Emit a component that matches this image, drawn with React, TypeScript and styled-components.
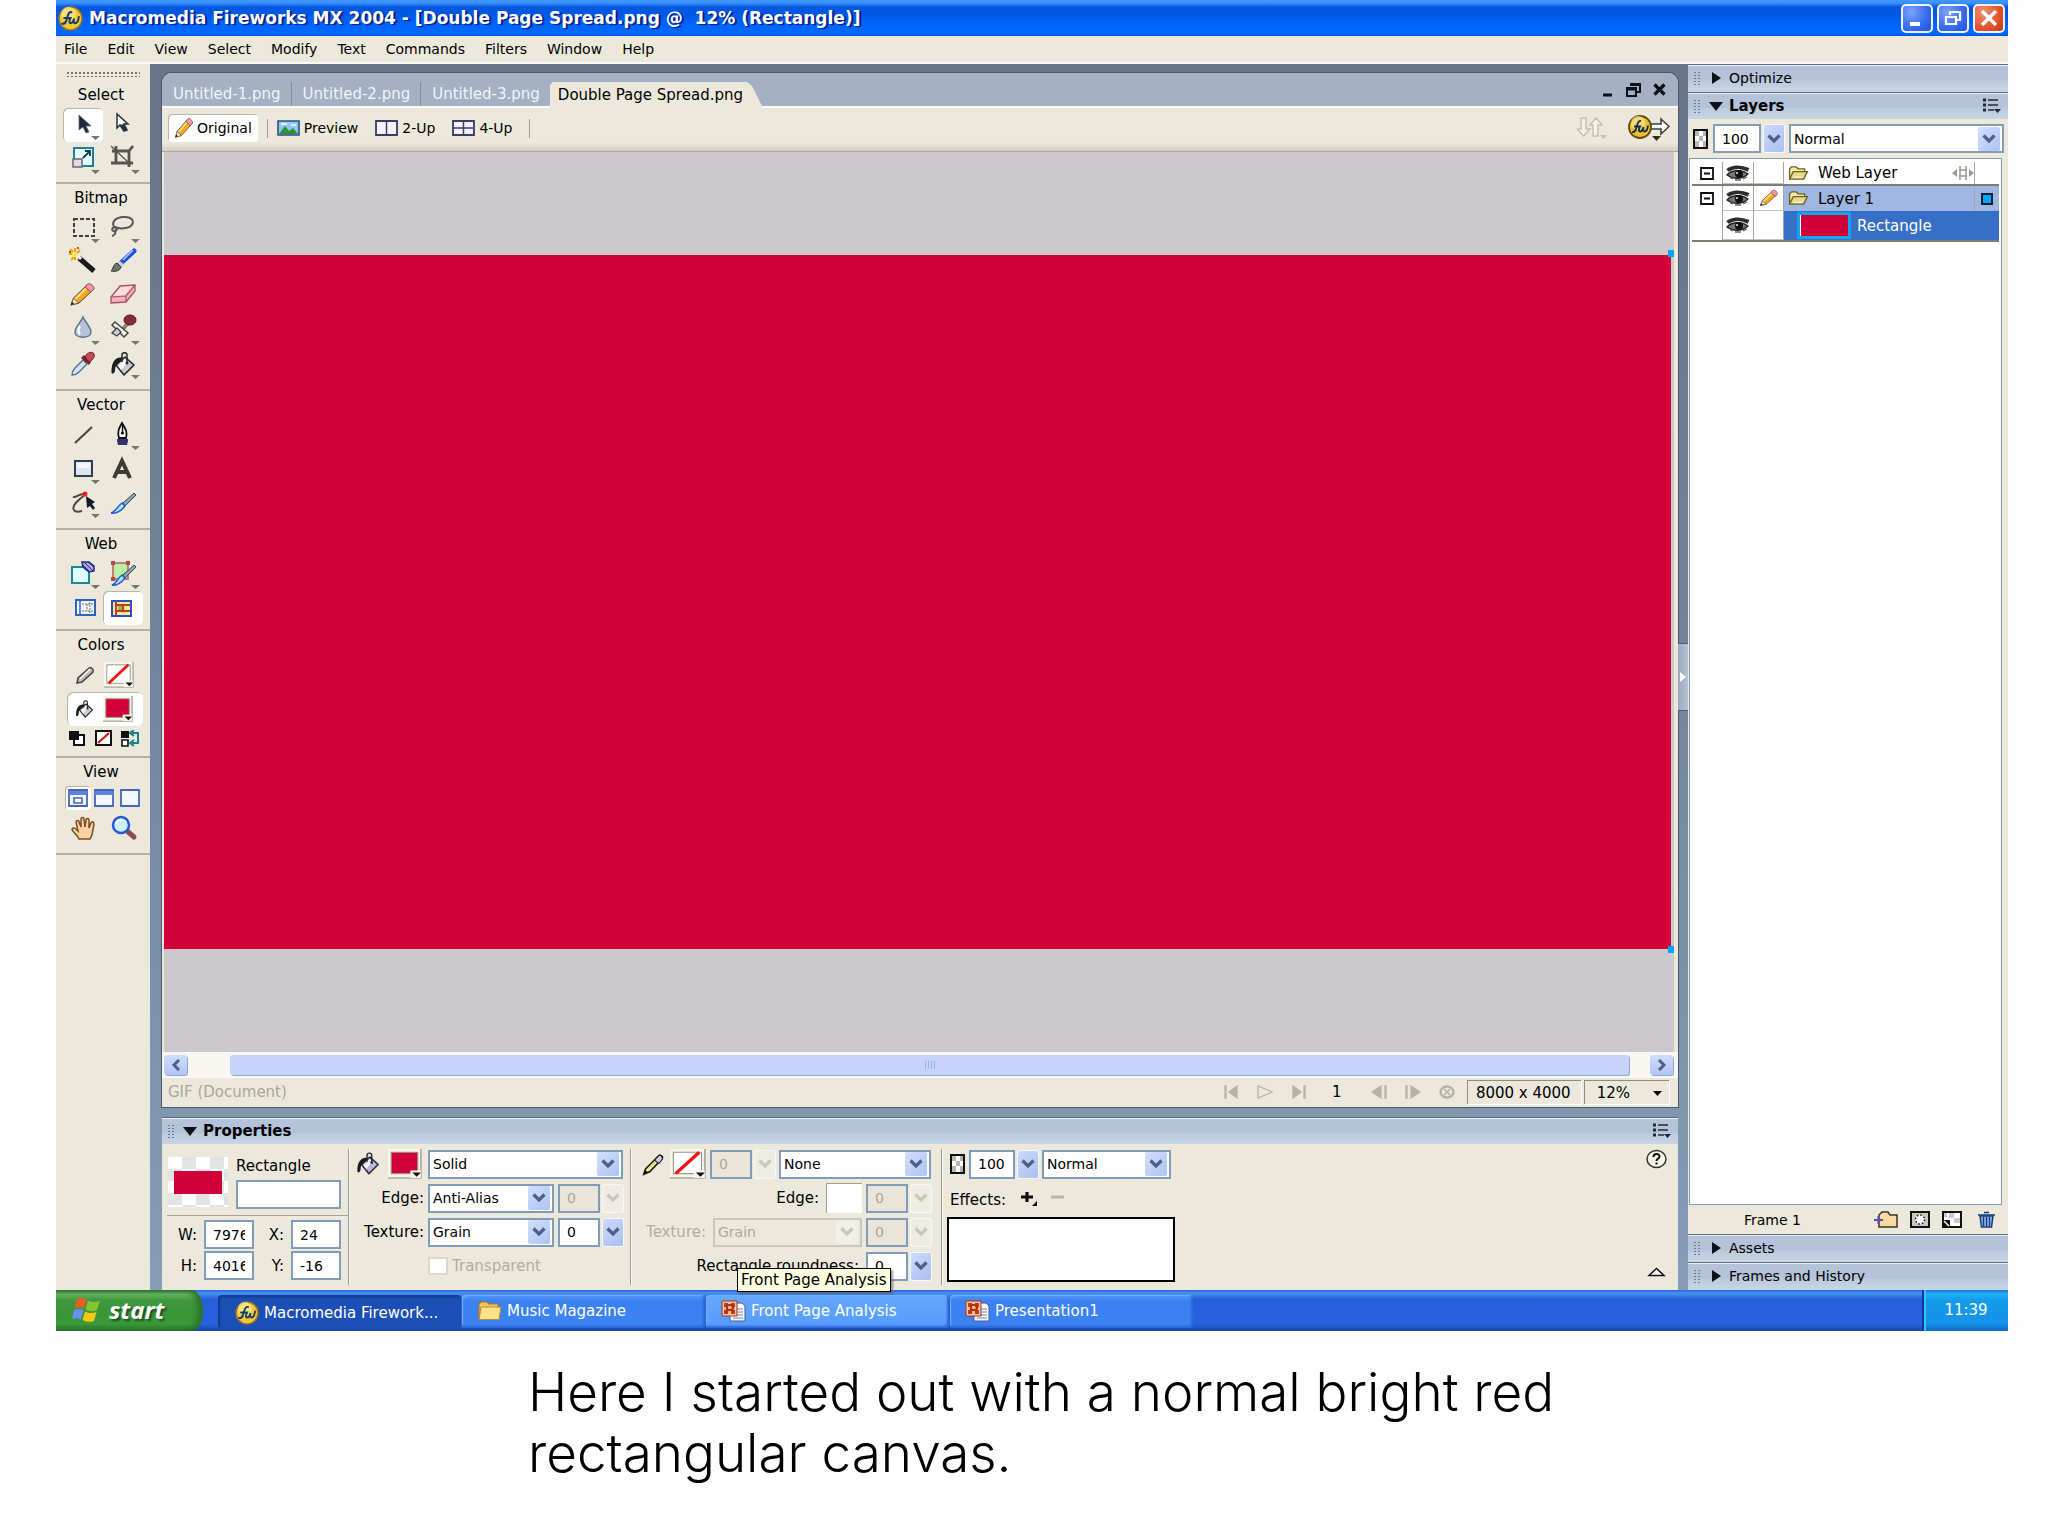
import React from "react";
import styled, { createGlobalStyle, css } from "styled-components";

const BEIGE = "#ece9dc";
const RED = "#d20039";
const BLUE_BORDER = "#7f9db9";

const GlobalStyle = createGlobalStyle`
  *, *::before, *::after { box-sizing: border-box; }
  body { margin: 0; background: #fefefe; color: #000; font: 14px/18px "DejaVu Sans", Verdana, sans-serif; }
  button, input, select { font: inherit; color: inherit; margin: 0; }
  button { padding: 0; border: 0; background: none; }
  ul { list-style: none; margin: 0; padding: 0; }
  svg { display: block; flex: none; }
`;

/* ---------- page ---------- */

const Slide = styled.div`
  min-height: 100vh;
  display: flex;
  flex-direction: column;
`;

const Screen = styled.main`
  flex: 1;
  display: flex;
  flex-direction: column;
  margin: 0 40px 0 56px;
`;

const Caption = styled.p`
  margin: 0;
  padding: 31px 0 0 528px;
  height: 205px;
  max-width: 1600px;
  font: 300 53px/61px Inter, "Open Sans", sans-serif;
`;

/* ---------- title bar and menu ---------- */

const TitleBar = styled.header`
  display: flex;
  align-items: center;
  gap: 6px;
  height: 36px;
  padding: 0 3px 0 2px;
  background: linear-gradient(#4098fc 0, #3a90f8 3px, #0357e0 7px, #0058e6 14px, #0066ff 26px, #0068ff 34px, #0050d8);
  color: #fff;
`;

const AppTitle = styled.h1`
  flex: 1;
  margin: 0;
  font-size: 17px;
  line-height: 24px;
  font-weight: 700;
  white-space: pre;
  text-shadow: 2px 1px 1px #0a1883;
`;

const WindowButtons = styled.div`
  display: flex;
  gap: 4px;
`;

const WindowButton = styled.button<{ $close?: boolean }>`
  display: grid;
  place-items: center;
  width: 32px;
  height: 29px;
  border: 2px solid #eef3ff;
  border-radius: 5px;
  background: ${(p) =>
    p.$close
      ? "radial-gradient(circle at 30% 25%, #f09070, #e2522b 60%, #c8370f)"
      : "radial-gradient(circle at 30% 25%, #7fa4fa, #3a6df0 55%, #2253d8)"};
`;

const MenuBar = styled.nav`
  display: flex;
  align-items: center;
  gap: 20px;
  height: 28px;
  padding: 0 8px;
  background: ${BEIGE};
  border-bottom: 2px solid #fbfaf5;
`;

/* ---------- workspace ---------- */

const Workspace = styled.div`
  flex: 1;
  display: flex;
  background: linear-gradient(#67748a, #6e8298 40%, #859db5);
`;

const Toolbox = styled.aside`
  width: 94px;
  background: ${BEIGE};
`;

const Grip = styled.div`
  height: 6px;
  margin: 6px 3px 5px;
  background-image: radial-gradient(#77746a 1px, transparent 1px);
  background-size: 4px 4px;
`;

const ToolGroup = styled.section<{ $pad: number }>`
  padding: 1px 7px ${(p) => p.$pad}px;
  border-bottom: 2px solid #b4b1a3;
`;

const GroupTitle = styled.h2`
  margin: 0;
  padding-right: 4px;
  font-size: 15px;
  line-height: 26px;
  font-weight: 400;
  text-align: center;
`;

const ToolGrid = styled.div`
  display: grid;
  grid-template-columns: 40px 40px;
`;

const Tool = styled.button<{ $on?: boolean }>`
  display: block;
  height: 34px;
  ${(p) =>
    p.$on &&
    css`
      border-radius: 5px;
      background: #fff;
      box-shadow: inset 1px 1px 0 #b9b5a6;
    `}
`;

const FillRow = styled.div<{ $on?: boolean }>`
  display: flex;
  align-items: center;
  gap: 9px;
  height: 34px;
  margin-left: 4px;
  padding-left: 8px;
  border-radius: 6px;
  ${(p) => p.$on && "background: #fff; box-shadow: inset 1px 1px 0 #b9b5a6;"}
`;

const MiniRow = styled.div<{ $tall?: boolean }>`
  display: flex;
  justify-content: space-between;
  align-items: center;
  height: ${(p) => (p.$tall ? 26 : 24)}px;
  padding: 0 3px 0 5px;
`;

const MiniTool = styled.button<{ $on?: boolean }>`
  padding: 3px;
  margin: -3px;
  ${(p) => p.$on && "border-radius: 4px; background: #fff; box-shadow: inset 1px 1px 0 #b9b5a6;"}
`;

const Center = styled.div`
  flex: 1;
  min-width: 0;
  display: flex;
  flex-direction: column;
  gap: 10px;
  padding: 9px 0 0 12px;
`;

const Splitter = styled.div`
  width: 10px;
  display: flex;
  align-items: center;
`;

const SplitterHandle = styled.button`
  display: grid;
  place-items: center;
  width: 10px;
  height: 68px;
  border: solid #4b5c70;
  border-width: 1px 0;
  background: linear-gradient(90deg, #9aabc0, #b9c1d2);
`;

/* ---------- document window ---------- */

const DocWindow = styled.section`
  flex: 1;
  display: flex;
  flex-direction: column;
  border-radius: 10px 10px 0 0;
  background: ${BEIGE};
  box-shadow: 0 0 0 1px #49586c;
`;

const TabBar = styled.div`
  display: flex;
  align-items: flex-end;
  height: 35px;
  border-bottom: 2px solid #fdfdfa;
  border-radius: 10px 10px 0 0;
  background: #a4b0c3;
`;

const Tab = styled.button`
  height: 24px;
  padding: 0 10px 0 11px;
  font-size: 15px;
  color: #f1f5fb;
  & + & { border-left: 1px solid #7f8da3; }
`;

const ActiveTab = styled.button`
  height: 26px;
  margin-bottom: -2px;
  padding: 0 20px 0 8px;
  font-size: 15px;
  background: ${BEIGE};
  clip-path: polygon(0 3px, 3px 0, calc(100% - 16px) 0, calc(100% - 11px) 4px, 100% 100%, 0 100%);
`;

const DocControls = styled.div`
  display: flex;
  align-items: center;
  gap: 12px;
  align-self: center;
  margin: 0 12px 0 auto;
`;

const ViewBar = styled.div`
  display: flex;
  align-items: center;
  gap: 17px;
  height: 44px;
  padding: 0 8px 3px 6px;
  border-bottom: 1px solid #aaa798;
  background: linear-gradient(${BEIGE} 80%, #d3d0c1);
`;

const ViewButton = styled.button<{ $on?: boolean }>`
  display: flex;
  align-items: center;
  gap: 4px;
  ${(p) =>
    p.$on &&
    css`
      height: 28px;
      gap: 3px;
      padding: 0 6px;
      border-radius: 4px;
      background: #fff;
      box-shadow: inset 1px 1px 0 #b9b5a6;
    `}
`;

const BarRule = styled.span<{ $tight?: boolean }>`
  width: 1px;
  height: 19px;
  margin: 0 ${(p) => (p.$tight ? -8 : 0)}px;
  background: #a29f92;
`;

const ViewBarEnd = styled.div`
  display: flex;
  align-items: center;
  gap: 20px;
  margin-left: auto;
`;

const CanvasArea = styled.div`
  flex: 1;
  display: flex;
  margin: 0 4px 0 2px;
  padding: 103px 3px 103px 0;
  background: #cbc9cc;
`;

const RedCanvas = styled.div`
  position: relative;
  flex: 1;
  background: ${RED};
`;

const Handle = styled.span<{ $bottom?: boolean }>`
  position: absolute;
  right: -3px;
  ${(p) => (p.$bottom ? "bottom: -4px" : "top: -5px")};
  width: 6px;
  height: 7px;
  background: #00a5ff;
`;

const ScrollBar = styled.div`
  display: flex;
  align-items: center;
  height: 25px;
  padding: 0 5px 0 2px;
  background: #f8f7f2;
`;

const ScrollButton = styled.button`
  display: grid;
  place-items: center;
  width: 23px;
  height: 20px;
  border-radius: 3px;
  background: linear-gradient(#cfdcfe, #b2c6f4);
  box-shadow: 1px 1px 0 #8ea6d8;
`;

const ScrollTrack = styled.div`
  flex: 1;
  padding: 0 21px 0 43px;
`;

const ScrollThumb = styled.div`
  display: flex;
  justify-content: center;
  align-items: center;
  gap: 2px;
  height: 20px;
  border-radius: 3px;
  background: #c6d4fc;
  box-shadow: 1px 1px 0 #8ea6d8;
`;

const ThumbNotch = styled.i`
  width: 1px;
  height: 8px;
  background: #94aee6;
`;

const StatusBar = styled.div`
  display: flex;
  align-items: center;
  height: 30px;
  padding: 0 9px 1px 6px;
  border-top: 1px solid #fbfaf5;
`;

const StatusName = styled.span`
  flex: 1;
  font-size: 15px;
  color: #a9a798;
`;

const FrameControls = styled.div`
  display: flex;
  align-items: center;
  gap: 18px;
  margin-right: 12px;
`;

const FrameNumber = styled.span`
  width: 28px;
  padding-right: 4px;
  text-align: center;
  font-size: 15px;
`;

const StatusBox = styled.span`
  display: flex;
  align-items: center;
  justify-content: center;
  gap: 23px;
  height: 24px;
  padding: 0 10px 0 8px;
  border: solid #8f8d80;
  border-width: 1px 0 0 1px;
  box-shadow: 1px 1px 0 #fff;
  font-size: 15px;
  & + & { margin-left: 3px; padding: 0 7px 0 12px; }
`;

/* ---------- panel headers ---------- */

const PanelHead = styled.div<{ $open?: boolean }>`
  display: flex;
  align-items: center;
  gap: ${(p) => (p.$open ? 8 : 10)}px;
  height: ${(p) => (p.$open ? 27 : 28)}px;
  padding: 0 6px ${(p) => (p.$open ? 0 : 2)}px 5px;
  border-top: 1px solid #5c6b7f;
  box-shadow: inset 0 1px 0 #e9f0f8;
  background: linear-gradient(#b4c2da 0 55%, #bccbdd 60%, #c6d6e4);
`;

const HeadGrip = styled.span`
  width: 8px;
  height: 14px;
  background-image: radial-gradient(#6b7a90 1px, transparent 1px);
  background-size: 4px 3px;
`;

const HeadTitle = styled.h2<{ $bold?: boolean }>`
  flex: 1;
  margin: 0 0 0 -2px;
  font-size: ${(p) => (p.$bold ? 15 : 14)}px;
  line-height: 18px;
  font-weight: ${(p) => (p.$bold ? 700 : 400)};
`;

/* ---------- form controls ---------- */

const TextBox = styled.input<{ $w?: number }>`
  ${(p) => (p.$w ? `width: ${p.$w}px` : "width: 100%")};
  flex: none;
  height: 29px;
  padding: 0 7px;
  border: 2px solid ${BLUE_BORDER};
  background: #fff;
  &:disabled { background: #e9e6d9; color: #aaa79a; }
`;

const DropWrap = styled.span<{ $w?: number; $off?: boolean }>`
  display: grid;
  grid-template-columns: 1fr 24px;
  align-items: center;
  ${(p) => (p.$w ? `width: ${p.$w}px; flex: none` : "flex: 1")};
  height: 29px;
  border: 2px solid ${(p) => (p.$off ? "#cbc8b9" : BLUE_BORDER)};
  background: ${(p) => (p.$off ? BEIGE : "#fff")};
`;

const DropSelect = styled.select`
  grid-area: 1 / 1 / 2 / 3;
  width: 100%;
  height: 100%;
  padding: 0 24px 0 3px;
  border: 0;
  appearance: none;
  background: none;
  &:disabled { color: #aaa79a; opacity: 1; }
`;

const ArrowFace = styled.span<{ $off?: boolean }>`
  grid-area: 1 / 2;
  display: grid;
  place-items: center;
  width: 22px;
  height: 24px;
  border-radius: 2px;
  pointer-events: none;
  color: ${(p) => (p.$off ? "#c9c7ba" : "#4d6185")};
  background: ${(p) => (p.$off ? "#f1efe6" : "linear-gradient(135deg, #d3dffb, #aec3f3)")};
`;

const StepButton = styled.button`
  display: grid;
  place-items: center;
  width: 20px;
  height: 27px;
  flex: none;
  border-radius: 2px;
  color: #4d6185;
  background: linear-gradient(135deg, #cddafa, #aabff0);
  box-shadow: 0 0 0 1px #f6f8ff;
  &:disabled { color: #c9c7ba; background: #efede3; }
`;

const Stepper = styled.span`
  display: flex;
  align-items: center;
  gap: 3px;
`;

const Chevron = () => (
  <svg width="14" height="10" viewBox="0 0 14 10" aria-hidden="true">
    <path d="M1.5 1.5 7 7l5.5-5.5" fill="none" stroke="currentColor" strokeWidth="3.2" />
  </svg>
);

type DropProps = { label: string; value: string; w?: number; off?: boolean; id?: string };
const Drop = ({ label, value, w, off, id }: DropProps) => (
  <DropWrap $w={w} $off={off}>
    <DropSelect id={id} aria-label={label} disabled={off} defaultValue={value}>
      <option>{value}</option>
    </DropSelect>
    <ArrowFace $off={off}><Chevron /></ArrowFace>
  </DropWrap>
);

const NumberStep = ({ label, value, w, off, id }: DropProps) => (
  <Stepper>
    <TextBox id={id} $w={w} aria-label={label} defaultValue={value} disabled={off} />
    <StepButton disabled={off} aria-label={`Change ${label}`}><Chevron /></StepButton>
  </Stepper>
);

/* ---------- properties panel ---------- */

const Properties = styled.section`
  height: 173px;
  background: ${BEIGE};
`;

const PropBody = styled.div`
  display: flex;
  padding: 5px 8px 0 5px;
`;

const Column = styled.div<{ $w: number }>`
  width: ${(p) => p.$w}px;
  height: 136px;
  border-right: 1px solid #9b998c;
  box-shadow: 1px 0 0 #faf9f4;
`;

const PropRow = styled.div<{ $end?: boolean }>`
  display: flex;
  align-items: center;
  gap: 4px;
  height: 30px;
  margin-bottom: 4px;
  padding-right: ${(p) => (p.$end ? 10 : 0)}px;
  ${(p) => p.$end && "justify-content: flex-end"};
`;

const PropLabel = styled.label<{ $off?: boolean; $w?: number }>`
  ${(p) => p.$w && `width: ${p.$w}px`};
  flex: none;
  margin-right: ${(p) => (p.$w ? 0 : 3)}px;
  font-size: 15px;
  text-align: right;
  color: ${(p) => (p.$off ? "#b0ad9f" : "#000")};
`;

const ObjectHead = styled.div`
  display: flex;
  gap: 8px;
  height: 67px;
  padding: 8px 7px 0 1px;
  border-bottom: 1px solid #a5a395;
`;

const Preview = styled.div`
  display: grid;
  place-items: center;
  width: 60px;
  height: 50px;
  background: conic-gradient(#e3e2e4 25%, #fff 0 50%, #e3e2e4 0 75%, #fff 0) 0 0 / 28px 24px;
  &::after {
    content: "";
    width: 48px;
    height: 23px;
    background: ${RED};
  }
`;

const ObjectName = styled.label`
  flex: 1;
  display: flex;
  flex-direction: column;
  gap: 5px;
  font-size: 15px;
  line-height: 18px;
`;

const Measures = styled.div`
  display: grid;
  grid-template-columns: 30px 50px 23px 50px;
  column-gap: 7px;
  row-gap: 2px;
  align-items: center;
  padding-top: 4px;
`;

const FillTools = styled.span`
  display: flex;
  align-items: center;
  gap: 8px;
  width: 75px;
  padding-left: 7px;
`;

const Check = styled.input`
  appearance: none;
  width: 20px;
  height: 18px;
  border: 2px solid #dcd9cc;
  background: #fff;
`;

const EdgeBox = styled.span`
  width: 36px;
  height: 30px;
  border: solid #a3a194;
  border-width: 1px 0 0 1px;
  background: #fff;
`;

const EffectColumn = styled.div`
  flex: 1;
  padding-left: 8px;
`;

const EffectList = styled.div`
  width: 228px;
  height: 65px;
  margin: 3px 0 0 -3px;
  border: 2px solid #000;
  background: #fff;
`;

const EffectLabel = styled.span`
  padding: 4px 10px 0 0;
  font-size: 15px;
`;

const PropEnd = styled.div`
  display: flex;
  flex-direction: column;
  align-items: center;
  justify-content: space-between;
  height: 128px;
  padding-right: 3px;
`;

/* ---------- right panels ---------- */

const RightDock = styled.aside`
  width: 320px;
  display: flex;
  flex-direction: column;
  background: ${BEIGE};
`;

const BlendRow = styled.div`
  display: flex;
  align-items: center;
  gap: 5px;
  height: 39px;
  padding: 0 4px 0 5px;
`;

const LayerList = styled.ul`
  flex: 1;
  margin: 0 6px 0 1px;
  padding: 3px 2px;
  border: 1px solid ${BLUE_BORDER};
  background: #fff;
`;

const LayerRow = styled.li<{ $h: number; $rule?: boolean }>`
  display: grid;
  grid-template-columns: 31px 31px 30px 1fr;
  height: ${(p) => p.$h}px;
  font-size: 15px;
  ${(p) => p.$rule && "border-bottom: 2px solid #7d7b74"};
`;

const LayerCell = styled.span`
  display: grid;
  place-items: center;
  border-right: 1px solid #a6a49c;
  border-bottom: 1px solid #c5c3bb;
  &:first-child { border-bottom: 0; }
`;

const LayerName = styled.span<{ $tone?: string; $light?: boolean }>`
  display: flex;
  align-items: center;
  padding-left: 4px;
  background: ${(p) => p.$tone ?? "#fff"};
  color: ${(p) => (p.$light ? "#fff" : "#000")};
`;

const LayerText = styled.span`
  flex: 1;
  padding-left: 9px;
`;

const LayerFlag = styled.span`
  display: grid;
  place-items: center;
  align-self: stretch;
  width: 25px;
  border-left: 1px solid #a6a49c;
`;

const SelectedMark = styled.i`
  width: 12px;
  height: 12px;
  border: 2px solid #10202e;
  background: #00a5ff;
`;

const LayerThumb = styled.span`
  width: 54px;
  height: 27px;
  margin: 0 -3px 0 9px;
  border: 3px solid #14a4ee;
  background: ${RED};
  box-shadow: inset 1px 0 0 #fff;
`;

const LayerFoot = styled.div`
  display: flex;
  align-items: center;
  height: 29px;
  padding: 0 13px 0 56px;
`;

const FootIcons = styled.div`
  display: flex;
  align-items: center;
  gap: 12px;
  margin-left: auto;
  & > :last-child { margin-left: 4px; }
`;

/* ---------- taskbar ---------- */

const TaskBar = styled.footer`
  display: flex;
  height: 41px;
  background: linear-gradient(#2a62d8 0, #4591f2 3px, #3d86ec 5px, #245edb 9px, #2663e0 34px, #1d49ab 40px);
  color: #fff;
  font-size: 15px;
`;

const StartButton = styled.button`
  display: flex;
  align-items: center;
  gap: 8px;
  width: 147px;
  margin-right: 15px;
  padding: 0 0 2px 16px;
  border-radius: 0 12px 12px 0 / 0 20px 20px 0;
  background: linear-gradient(#2f7a30 0, #6bb368 4px, #40983e 10px, #389537 26px, #3a9a3a 34px, #2a7428);
  box-shadow: inset -5px 0 6px #26702a;
  font: italic 700 24px/30px "Open Sans", sans-serif;
  text-shadow: 2px 2px 2px #1d4c1c;
`;

const Tasks = styled.div`
  display: flex;
  gap: 1px;
  flex: 1;
  padding: 5px 0 3px;
`;

const Task = styled.button<{ $tone?: "active" | "hover" }>`
  position: relative;
  display: flex;
  align-items: center;
  gap: 5px;
  width: 243px;
  padding: ${(p) => (p.$tone === "active" ? "2px 0 0 17px" : "0 0 2px 15px")};
  border-radius: 4px;
  background: ${(p) =>
    p.$tone === "active" ? "#1c4fb5" : p.$tone === "hover" ? "linear-gradient(#66a8ff, #549bfd)" : "linear-gradient(#5595f7, #3c81f3 6px, #3d82f3)"};
  box-shadow: ${(p) => (p.$tone === "active" ? "inset 2px 2px 2px #123a8c" : "inset -2px -2px 2px #2c68d6, inset 1px 1px 1px #79b0fb")};
`;

const Tooltip = styled.span`
  position: absolute;
  left: 31px;
  bottom: 36px;
  height: 24px;
  padding: 1px 3px;
  border: 1px solid #000;
  background: #ffffe1;
  box-shadow: 2px 2px 2px #55555599;
  color: #000;
  line-height: 20px;
  white-space: nowrap;
`;

const Clock = styled.time`
  display: grid;
  place-items: center;
  width: 86px;
  border-left: 2px solid #0b3a99;
  background: linear-gradient(#1a6ed8 0, #1fb4f8 4px, #149be8 10px, #1492ea 34px, #0f6cc4 40px);
  box-shadow: inset 2px 0 1px #35c5ff;
  padding-bottom: 2px;
  font-size: 15px;
`;

/* ---------- icons ---------- */

const Caret = ({ x = 28, y = 28 }) => <path d={`M${x} ${y}h9l-4.500 4z`} fill="#77756c" />;

const Cell = ({ children, menu }: { children: React.ReactNode; menu?: boolean }) => (
  <svg width="40" height="34" viewBox="0 0 40 34" aria-hidden="true">
    {children}
    {menu && <Caret />}
  </svg>
);

const FW_STROKES =
  "M4 17c4 1 4-4 5.500-8 .8-2.400 2-3.500 3.500-3M6 11.500h6c-1.500 3-1.500 5 .2 5 1.800 0 2.600-2 3.200-4.500-.6 2.500-.4 4.500 1 4.500 2 0 3.200-2.500 3.600-6";

const FwLogo = ({ size = 24 }) => (
  <svg width={size} height={size} viewBox="0 0 24 24" aria-hidden="true">
    <circle cx="12" cy="12" r="11" fill="#f4c63a" stroke="#9a7420" strokeWidth="1.500" />
    <circle cx="10" cy="8" r="7" fill="#fbe58e" opacity=".8" />
    <path d={FW_STROKES} fill="none" stroke="#12405e" strokeWidth="1.900" strokeLinecap="round" />
  </svg>
);

const PencilShape = () => (
  <g>
    <path d="M8 26 10.500 19 24 6l6 5-14 13z" fill="#f7a62a" stroke="#6b4a1c" strokeWidth="1" />
    <path d="m12 20.500 13-13" stroke="#ffe08a" strokeWidth="2" />
    <path d="m8 26 2.500-7 5.500 5z" fill="#f5dcae" stroke="#5b4a3a" strokeWidth=".8" />
    <path d="m8 26 1-3 2 1.800z" fill="#111" />
    <path d="m22 8 2.500-3c2-1.500 7 2 6.500 5l-3 3z" fill="#ee9aa2" stroke="#8a4a50" strokeWidth="1" />
  </g>
);

const PencilIcon = ({ w = 20, h = 22 }) => (
  <svg width={w} height={h} viewBox="6 3 27 25" preserveAspectRatio="none" aria-hidden="true"><PencilShape /></svg>
);

const BucketShape = ({ body = "#c9cbd0" }) => (
  <g strokeLinejoin="round">
    <path d="M13 16 22 8l9 8-10 10z" fill={body} stroke="#26262c" strokeWidth="1.600" />
    <path d="m15 17 7-7 3 3-7 8z" fill="#fff" opacity=".85" />
    <path d="M19 13V6c0-3 5-3 5 0v7" fill="none" stroke="#26262c" strokeWidth="1.500" />
    <circle cx="24" cy="14" r="1.500" fill="#26262c" />
    <path d="M20 9c-7-2-12 4-11.500 15 2 2 3.500-1 3.500-3 0-3 1-5 3-6.500z" fill="#1c1c20" />
  </g>
);

const BucketIcon = ({ body, size = 22 }: { body?: string; size?: number }) => (
  <svg width={size} height={size} viewBox="7 3 26 25" aria-hidden="true"><BucketShape body={body} /></svg>
);

const Swatch = ({ fill, w = 34, h = 30 }: { fill?: string; w?: number; h?: number }) => (
  <svg width={w} height={h} viewBox="0 0 32 28" preserveAspectRatio="none" aria-hidden="true">
    <path d="M0 0h32v28H0z" fill="#f7f5ec" />
    <path d="M31 0v27H0" fill="none" stroke="#a8a597" strokeWidth="1.500" />
    <path d="M3 3h25v20H3z" fill={fill ?? "#fff"} stroke="#99968a" strokeWidth="1" />
    {!fill && <path d="M5 23 26 3" stroke="#f01414" strokeWidth="3" />}
    <path d="M21 20h10v7H21z" fill="#f7f5ec" />
    <path d="M23 22h8l-4 4z" fill="#111" />
  </svg>
);

const Triangle = ({ open }: { open?: boolean }) => (
  <svg width={open ? 14 : 10} height="12" viewBox={open ? "0 0 14 12" : "0 0 10 12"} aria-hidden="true">
    <path d={open ? "M0 2h14L7 11z" : "M1 0l9 6-9 6z"} fill="#0b1119" />
  </svg>
);

const OptionsIcon = () => (
  <svg width="20" height="16" viewBox="0 0 20 16" aria-hidden="true">
    <path d="M1 2h3M1 7h3M1 12h3" stroke="#1f2a38" strokeWidth="3" />
    <path d="M6 2h10M6 7h10M6 12h6" stroke="#1f2a38" strokeWidth="1.500" />
    <path d="M12 11h7l-3.500 4z" fill="#1f2a38" />
  </svg>
);

const EyeIcon = () => (
  <svg width="24" height="16" viewBox="0 0 24 16" aria-hidden="true">
    <path d="M1 5C5 1 14 0 23 4M2 6c6-4 14-4 20 0" fill="none" stroke="#2b2b2b" strokeWidth="2" />
    <path d="M1 10c4-5 14-6 21-1-5 5-14 6-21 1z" fill="#777" stroke="#222" strokeWidth="1.300" />
    <circle cx="13" cy="9" r="4" fill="#111" />
    <circle cx="11" cy="8" r="1" fill="#eee" />
    <path d="M4 13l3 1M9 15h6M17 14l4-2" stroke="#666" strokeWidth="1.300" />
  </svg>
);

const FolderIcon = () => (
  <svg width="21" height="15" viewBox="0 0 21 16" aria-hidden="true">
    <path d="M1 14V3l2-2h5l2 2h7v3" fill="#f3eaa6" stroke="#6b611f" strokeWidth="1.400" />
    <path d="M1 14 5 6h15l-4 8z" fill="#e9d98a" stroke="#6b611f" strokeWidth="1.400" />
    <path d="M5.500 12h9" stroke="#fbf6cf" strokeWidth="1.500" />
  </svg>
);

const ExpandIcon = () => (
  <svg width="14" height="13" viewBox="0 0 14 13" aria-hidden="true">
    <path d="M1 1h12v11H1zM4 6.500h6" fill="none" stroke="#111" strokeWidth="1.800" />
  </svg>
);

const OpacityIcon = () => (
  <svg width="15" height="20" viewBox="0 0 15 20" aria-hidden="true">
    <path d="M1 1h13v18H1z" fill="#fff" stroke="#111" strokeWidth="2" />
    <path d="M2 2h4v5H2zM10 2h3v5h-3zM6 7h4v5H6zM2 12h4v6H2zM10 12h3v6h-3z" fill="#b5b5b5" />
  </svg>
);

const PageIcon = ({ four }: { four?: boolean }) => (
  <svg width="23" height="16" viewBox="0 0 23 16" aria-hidden="true">
    <path d="M1 1h21v14H1z" fill="#f2f3fd" stroke="#3c3c66" strokeWidth="1.800" />
    <path d="M11.500 1v14" stroke="#3c3c66" strokeWidth="1.500" />
    {four && <path d="M1 8h21" stroke="#3c3c66" strokeWidth="1.500" />}
  </svg>
);

const ImageIcon = () => (
  <svg width="23" height="16" viewBox="0 0 23 16" aria-hidden="true">
    <path d="M1 1h21v14H1z" fill="#8fc6f2" stroke="#2c4f80" strokeWidth="1.600" />
    <path d="M2 14 8 6l4 5 4-3 5 6z" fill="#2e8f34" />
    <path d="M4 4h6M14 5h5" stroke="#fff" strokeWidth="1.500" />
  </svg>
);

const PptIcon = () => (
  <svg width="25" height="22" viewBox="0 0 25 22" aria-hidden="true">
    <path d="M9 3h12l3 3v15H9z" fill="#f5f7ff" stroke="#4d5b86" />
    <path d="M16 9h6M16 12h6M16 15h6M12 18h10" stroke="#7d8ab0" />
    <path d="M1 1h15v15H1z" fill="#f3c3a4" stroke="#9c3a1a" />
    <path d="M3 3h4v4H3zM10 3h4v4h-4zM3 10h4v4H3zM10 10h4v4h-4z" fill="#c23a16" />
    <path d="M6 13V5h3.500a2.500 2.500 0 0 1 0 5H6" fill="none" stroke="#b8300e" strokeWidth="2.200" />
  </svg>
);

const BigFolder = () => (
  <svg width="25" height="20" viewBox="0 0 25 20" aria-hidden="true">
    <path d="M2 18V3l2-2h6l2 2h9v4" fill="#f0c65a" stroke="#a87a1e" strokeWidth="1.200" />
    <path d="M2 18.500 4 6h20l-2 12.500z" fill="#fbe28a" stroke="#b98a2a" strokeWidth="1.200" />
  </svg>
);

const WindowsFlag = () => (
  <svg width="29" height="25" viewBox="0 0 29 25" aria-hidden="true">
    <path d="M5 2c4-2 7-1 9.500.5L12 11.500C9 10 6 10 2.500 11z" fill="#ee5a24" />
    <path d="M16 3.500c4 2 8 2 12 0L25 13c-4 2-8 1.500-11.500-.5z" fill="#86c530" />
    <path d="M2 13c4-1.500 7-1 9.500.5L9 22.500C6 21 3.500 21 0 22z" fill="#6590f6" />
    <path d="M13 14.500c4 2 8 2 11.500.5L22 24c-4 1.500-8 1-11.500-1z" fill="#fac60e" />
  </svg>
);

type ToolDef = { name: string; on?: boolean; icon: React.ReactNode };

const selectTools: ToolDef[] = [
  { name: "Pointer", on: true, icon: <Cell menu><path d="M16 7v15l4-3 3 6 3-1-3-6h5z" fill="#1d2838" stroke="#5e6b7c" strokeWidth=".8" /></Cell> },
  { name: "Subselection", icon: <Cell><path d="M14 6v14l3-3 4 6 3-1-3-6h4z" fill="#fff" stroke="#27303e" strokeWidth="1.500" /><path d="m17 17 4 6 3-1-3-6z" fill="#27303e" /></Cell> },
  { name: "Scale", icon: <Cell menu><path d="M11 6h19v18H11z" fill="#e6fbfd" stroke="#1b7f9c" strokeWidth="2" /><path d="m20 16 7-7m-5 0h5v5" fill="none" stroke="#123a52" strokeWidth="1.800" /><path d="M10 17h9v8h-9z" fill="#dddde2" stroke="#666676" strokeWidth="1.500" /></Cell> },
  { name: "Crop", icon: <Cell menu><path d="M9 9h17v16M13 4v17h17M8 21h5M26 9l4-5" fill="none" stroke="#55534e" strokeWidth="2.800" /><path d="m8 4 18 17" stroke="#55534e" strokeWidth="1.300" /></Cell> },
];

const bitmapTools: ToolDef[] = [
  { name: "Marquee", icon: <Cell menu><path d="M11 8h20v17H11z" fill="none" stroke="#3f3e3a" strokeWidth="2" strokeDasharray="4 2" /></Cell> },
  { name: "Lasso", icon: <Cell menu><path d="M13 18c-6-5-2-12 8-12 12 0 11 9 2 11-5 1-9 0-11-1m0 0c-3 0-4 4-1 4 3 1 4-3 1-4m0 4c1 2 0 4-3 5" fill="none" stroke="#55565a" strokeWidth="2" /></Cell> },
  { name: "Magic Wand", icon: <Cell><path d="M16 13 31 26" stroke="#1a1a1a" strokeWidth="5" /><path d="m15 11 3 3" stroke="#eee" strokeWidth="3" /><path d="M12 3v4M6 9h4M7 4l3 3M17 5l-3 3M8 15l3-3M12 12v3" stroke="#f6a200" strokeWidth="2" /><path d="M9 8h5v4H9z" fill="#ffe94a" /><path d="M6 6h2v2H6zM14 2h2v2h-2z" fill="#e63a1e" /></Cell> },
  { name: "Brush", icon: <Cell><path d="m18 18 13-12" stroke="#1c50d8" strokeWidth="5" strokeLinecap="round" /><path d="m20 15 10-10" stroke="#a9c9ff" strokeWidth="1.500" /><path d="m15 17 5 4" stroke="#c8ccd2" strokeWidth="4" /><path d="M8 26c2-1 2-7 6-8l4 4c-1 4-6 5-10 4z" fill="#6d746c" stroke="#2e332e" /></Cell> },
  { name: "Pencil", icon: <Cell><PencilShape /></Cell> },
  { name: "Eraser", icon: <Cell><path d="m8 18 9-11 15-1v6l-9 11-15 1z" fill="#f3b0b7" stroke="#a45560" strokeWidth="1.300" /><path d="m8 18 15-1 9-11M23 17v6" fill="none" stroke="#a45560" strokeWidth="1.200" /><path d="m10 17 8-9 12-1-8 9z" fill="#fbdde0" /></Cell> },
  { name: "Blur", icon: <Cell menu><path d="M20 4c2 5 8 10 8 15 0 7-16 7-16 0 0-5 6-10 8-15z" fill="#b4c3d8" stroke="#5f7188" strokeWidth="1.400" /><path d="M17 13c-2 3-2 6 0 8" stroke="#fff" strokeWidth="2.500" fill="none" /></Cell> },
  { name: "Rubber Stamp", icon: <Cell menu><path d="m19 17 8-9" stroke="#9a7a7c" strokeWidth="4" /><ellipse cx="27" cy="7" rx="6" ry="5" fill="#8a2c34" stroke="#4f161b" /><path d="m9 12 3-3 13 11-4 4z" fill="#f4f4f6" stroke="#444" strokeWidth="1.500" /><path d="m9 20 5-5 4 4-4 4z" fill="#d0d0d4" stroke="#444" strokeWidth="1.300" /></Cell> },
  { name: "Eyedropper", icon: <Cell><path d="M9 28c0-3 1-5 3-7l8-8 4 4-8 8c-2 2-4 3-7 3z" fill="#cfe6f8" stroke="#4e6d8c" strokeWidth="1.300" /><path d="m18 11 8 7 2-3-7-7z" fill="#7c1f28" /><path d="M22 10c2-5 8-6 9-3s-1 6-5 8z" fill="#c24a54" stroke="#6d1b23" /></Cell> },
  { name: "Paint Bucket", icon: <Cell menu><g transform="translate(0 2)"><BucketShape /></g></Cell> },
];

const vectorTools: ToolDef[] = [
  { name: "Line", icon: <Cell><path d="m12 25 17-16" stroke="#4a4945" strokeWidth="2.200" /></Cell> },
  { name: "Pen", icon: <Cell menu><path d="M19 5c-3 5-5 9-3 15h7c2-6-1-10-4-15z" fill="#fff" stroke="#111" strokeWidth="1.800" /><path d="M19.500 7v8" stroke="#111" strokeWidth="1.500" /><circle cx="19.500" cy="15" r="1.500" /><path d="M14 21h11v2l-1 4H15l-1-4z" fill="#35306b" /></Cell> },
  { name: "Rectangle", icon: <Cell menu><path d="M12 9h17v15H12z" fill="#dbe7f2" stroke="#333c4e" strokeWidth="2" /><path d="M14 11h13v5H14z" fill="#fff" opacity=".7" /></Cell> },
  { name: "Text", icon: <Cell><path d="m11 26 8-17 8 17M14 20h10" fill="none" stroke="#3c3b37" strokeWidth="4" /></Cell> },
  { name: "Freeform", icon: <Cell menu><path d="M10 11c4 1 6-4 12-3M22 9c-6 4-14 11-11 15 1 2 4 2 8 1" fill="none" stroke="#4a4945" strokeWidth="2" /><circle cx="22" cy="8" r="2.500" fill="#f02020" /><path d="m23 10 1 12 3-2 3 4 2-2-3-4 3-2z" fill="#141a26" /></Cell> },
  { name: "Knife", icon: <Cell><path d="M20 17 31 7l2 2-11 11z" fill="#8ba2aa" stroke="#3a4b52" /><path d="M8 27c4-1 6-6 11-10l3 3c-4 5-9 8-14 7z" fill="#b9e0ff" stroke="#1c5fd0" strokeWidth="1.500" /></Cell> },
];

const webTools: ToolDef[] = [
  { name: "Hotspot", icon: <Cell menu><path d="M9 10h17v16H9z" fill="#dffbfc" stroke="#188a94" strokeWidth="2" /><path d="M19 5h7l5 4v5l-5 1-6-5z" fill="#a9a9e2" stroke="#28287c" strokeWidth="1.500" /><path d="m21 5 9 9M25 5l6 5M20 8l6 6" stroke="#28287c" /></Cell> },
  { name: "Slice", icon: <Cell menu><path d="M10 6h15v16H10z" fill="#b9f0a8" stroke="#b85a5a" strokeWidth="1.500" /><path d="M8 4h4v4H8zM23 4h4v4h-4zM8 20h4v4H8z" fill="#b04848" /><path d="M20 18 31 8l2 2-11 11z" fill="#8ba2aa" stroke="#3a4b52" /><path d="M9 28c4-1 5-6 10-10l3 3c-4 5-8 8-13 7z" fill="#b9e0ff" stroke="#1c5fd0" strokeWidth="1.500" /></Cell> },
  { name: "Hide Slices", icon: <Cell><path d="M13 9h19v15H13z" fill="#f4faff" stroke="#2b62c4" strokeWidth="2" /><path d="M17 10v13" stroke="#2b62c4" strokeWidth="1.500" /><path d="M19 13h11M19 20h11M24 13v7M27 11v12" stroke="#667" strokeDasharray="2 1" /></Cell> },
  { name: "Show Slices", on: true, icon: <Cell><path d="M9 10h19v15H9z" fill="#ffe79a" stroke="#2b50c4" strokeWidth="2" /><path d="M13 11v13M14 14h13M14 20h13M20 14v6" stroke="#cc3a1c" strokeWidth="2" /><path d="M15 15h4v4h-4z" fill="#7bc94c" /></Cell> },
];

const ToolSet = ({ title, tools, pad, grip }: { title: string; tools: ToolDef[]; pad: number; grip?: boolean }) => (
  <ToolGroup $pad={pad}>
    {grip && <Grip />}
    <GroupTitle>{title}</GroupTitle>
    <ToolGrid>
      {tools.map((t) => (
        <Tool key={t.name} $on={t.on} aria-label={t.name}>{t.icon}</Tool>
      ))}
    </ToolGrid>
  </ToolGroup>
);

const ViewModeIcon = ({ kind }: { kind: number }) => (
  <svg width="20" height="18" viewBox="0 0 20 18" aria-hidden="true">
    <path d="M1 1h18v16H1z" fill="#f3f6ff" stroke="#4466b8" strokeWidth="1.800" />
    {kind < 2 && <path d="M1 2h18v4H1z" fill="#5f83dc" />}
    {kind === 0 && <path d="M6 9h8v5H6z" fill="#fff" stroke="#4466b8" strokeWidth="1.600" />}
  </svg>
);

const LeftTools = () => (
  <Toolbox>
    <ToolSet grip title="Select" tools={selectTools} pad={6} />
    <ToolSet title="Bitmap" tools={bitmapTools} pad={8} />
    <ToolSet title="Vector" tools={vectorTools} pad={8} />
    <ToolSet title="Web" tools={webTools} pad={4} />
    <ToolGroup $pad={6}>
      <GroupTitle>Colors</GroupTitle>
      <FillRow>
        <svg width="20" height="20" viewBox="0 0 20 20" aria-hidden="true">
          <path d="M2 18 3 13 14 3c2-1 5 1 4 4L7 17z" fill="#b9b9b5" stroke="#45443f" strokeWidth="1.500" />
          <path d="m5 14 10-10" stroke="#fff" strokeWidth="1.500" />
        </svg>
        <Swatch w={30} h={26} />
      </FillRow>
      <FillRow $on>
        <BucketIcon size={19} />
        <Swatch w={30} h={26} fill={RED} />
      </FillRow>
      <MiniRow>
        <MiniTool aria-label="Default colors">
          <svg width="18" height="16" viewBox="0 0 18 16" aria-hidden="true">
            <path d="M6 5h10v10H6z" fill="#fff" stroke="#111" strokeWidth="2" />
            <path d="M1 1h10v9H1z" fill="#111" />
          </svg>
        </MiniTool>
        <MiniTool aria-label="No color">
          <svg width="17" height="16" viewBox="0 0 17 16" aria-hidden="true">
            <path d="M1 1h15v14H1z" fill="#fff" stroke="#111" strokeWidth="2" />
            <path d="M3 13 14 3" stroke="#d01818" strokeWidth="2.200" />
          </svg>
        </MiniTool>
        <MiniTool aria-label="Swap colors">
          <svg width="20" height="17" viewBox="0 0 20 17" aria-hidden="true">
            <path d="M1 1h8v7H1z" fill="#111" />
            <path d="M2 10h6v6H2z" fill="#fff" stroke="#111" strokeWidth="1.600" />
            <path d="M12 3h6v10h-6M14 0l-4 3 4 3M14 10l-4 3 4 3" fill="none" stroke="#157f8e" strokeWidth="2" />
          </svg>
        </MiniTool>
      </MiniRow>
    </ToolGroup>
    <ToolGroup $pad={8}>
      <GroupTitle>View</GroupTitle>
      <MiniRow $tall>
        {["Standard screen", "Full screen with menus", "Full screen"].map((n, i) => (
          <MiniTool key={n} $on={i === 0} aria-label={n}><ViewModeIcon kind={i} /></MiniTool>
        ))}
      </MiniRow>
      <ToolGrid>
        <Tool aria-label="Hand">
          <Cell>
            <path d="M16 28c-1-4-7-7-7-10 1-2 3-1 6 2l-2-9c0-2 3-2 3 0l2 5V8c0-2 3-2 3 0l1 8 1-7c0-2 3-2 3 0v8l2-5c1-2 3-1 3 1-1 4-1 11-4 15z" fill="#f8d2a2" stroke="#7b4d1f" strokeWidth="1.500" />
          </Cell>
        </Tool>
        <Tool aria-label="Zoom">
          <Cell>
            <path d="m24 20 7 6" stroke="#8c4a52" strokeWidth="5" strokeLinecap="round" />
            <circle cx="18" cy="14" r="8" fill="#cdeeff" stroke="#2458d8" strokeWidth="2.500" />
            <path d="M13 13c0-3 3-4 5-4" stroke="#fff" strokeWidth="2" fill="none" />
          </Cell>
        </Tool>
      </ToolGrid>
    </ToolGroup>
  </Toolbox>
);

const PlayIcon = ({ d, hollow, label }: { d: string; hollow?: boolean; label: string }) => (
  <button aria-label={label}>
    <svg width="16" height="14" viewBox="0 0 16 14" aria-hidden="true">
      <path d={d} fill={hollow ? "none" : "#b5b3a6"} stroke="#b5b3a6" strokeWidth="1.300" fillRule="evenodd" />
    </svg>
  </button>
);

const Document = () => (
  <DocWindow>
    <TabBar role="tablist">
      {["Untitled-1.png", "Untitled-2.png", "Untitled-3.png"].map((n) => (
        <Tab role="tab" aria-selected={false} key={n}>{n}</Tab>
      ))}
      <ActiveTab role="tab" aria-selected>Double Page Spread.png</ActiveTab>
      <DocControls>
        <button aria-label="Minimize document">
          <svg width="12" height="14" viewBox="0 0 12 14" aria-hidden="true"><path d="M1 12h9" stroke="#0b1119" strokeWidth="3" /></svg>
        </button>
        <button aria-label="Restore document">
          <svg width="15" height="14" viewBox="0 0 15 14" aria-hidden="true"><path d="M1 5h9v8H1zM4 1h10v8h-3M1 6.500h9M4 2h10" fill="none" stroke="#0b1119" strokeWidth="2" /></svg>
        </button>
        <button aria-label="Close document">
          <svg width="13" height="13" viewBox="0 0 13 13" aria-hidden="true"><path d="m1.500 1.500 10 10m0-10-10 10" stroke="#0b1119" strokeWidth="3.200" /></svg>
        </button>
      </DocControls>
    </TabBar>
    <ViewBar>
      <ViewButton $on><PencilIcon />Original</ViewButton>
      <BarRule $tight />
      <ViewButton><ImageIcon />Preview</ViewButton>
      <ViewButton><PageIcon />2-Up</ViewButton>
      <ViewButton><PageIcon four />4-Up</ViewButton>
      <BarRule />
      <ViewBarEnd>
        <svg width="31" height="22" viewBox="0 0 31 22" aria-hidden="true">
          <path d="M4 1h5v11h4l-6.500 7L0 12h4zM16 19V8h-3l6-7 6 7h-4v11z" fill="#f4f2e8" stroke="#c3c0b2" strokeWidth="1.500" />
          <path d="M23 18h7l-3.500 4z" fill="#c3c0b2" />
        </svg>
        <svg width="42" height="26" viewBox="0 0 42 26" aria-hidden="true">
          <path d="M20 9h13V4l8 7.500-8 7.500v-5H20z" fill="#fff" stroke="#3d3c38" strokeWidth="1.500" />
          <circle cx="12" cy="12" r="11" fill="#f0c02c" stroke="#5f4a14" strokeWidth="1.800" />
          <circle cx="10" cy="8" r="7" fill="#fbe58e" opacity=".7" />
          <path d={FW_STROKES} fill="none" stroke="#12304e" strokeWidth="1.900" />
          <path d="M24 21h9l-4.500 5z" fill="#33310c" />
        </svg>
      </ViewBarEnd>
    </ViewBar>
    <CanvasArea>
      <RedCanvas><Handle /><Handle $bottom /></RedCanvas>
    </CanvasArea>
    <ScrollBar>
      <ScrollButton aria-label="Scroll left">
        <svg width="10" height="12" viewBox="0 0 10 12" aria-hidden="true"><path d="M8 1 3 6l5 5" fill="none" stroke="#4d6185" strokeWidth="3" /></svg>
      </ScrollButton>
      <ScrollTrack>
        <ScrollThumb><ThumbNotch /><ThumbNotch /><ThumbNotch /><ThumbNotch /></ScrollThumb>
      </ScrollTrack>
      <ScrollButton aria-label="Scroll right">
        <svg width="10" height="12" viewBox="0 0 10 12" aria-hidden="true"><path d="m2 1 5 5-5 5" fill="none" stroke="#4d6185" strokeWidth="3" /></svg>
      </ScrollButton>
    </ScrollBar>
    <StatusBar>
      <StatusName>GIF (Document)</StatusName>
      <FrameControls>
        <PlayIcon label="First frame" d="M2 1h1v12H2zM14 1v12L6 7z" />
        <PlayIcon label="Play" hollow d="M1 1v12l14-6z" />
        <PlayIcon label="Last frame" d="M13 1h1v12h-1zM2 1v12l8-6z" />
        <FrameNumber>1</FrameNumber>
        <PlayIcon label="Previous frame" d="M14 1h1v12h-1zM10 1v12L1 7z" />
        <PlayIcon label="Next frame" d="M1 1h1v12H1zM6 1v12l9-6z" />
        <button aria-label="Stop">
          <svg width="16" height="14" viewBox="0 0 16 14" aria-hidden="true">
            <ellipse cx="8" cy="7" rx="6.500" ry="5.500" fill="none" stroke="#b5b3a6" strokeWidth="2.400" />
            <path d="m5 4 6 6m0-6-6 6" stroke="#b5b3a6" strokeWidth="1.600" />
          </svg>
        </button>
      </FrameControls>
      <StatusBox>8000 x 4000</StatusBox>
      <StatusBox>
        12%
        <svg width="9" height="6" viewBox="0 0 9 6" aria-hidden="true"><path d="M0 1h9L4.500 6z" /></svg>
      </StatusBox>
    </StatusBar>
  </DocWindow>
);

const PropertyPanel = () => (
  <Properties>
    <PanelHead $open>
      <HeadGrip /><Triangle open /><HeadTitle $bold>Properties</HeadTitle><OptionsIcon />
    </PanelHead>
    <PropBody>
      <Column $w={182}>
        <ObjectHead>
          <Preview />
          <ObjectName>Rectangle<TextBox /></ObjectName>
        </ObjectHead>
        <Measures>
          <PropLabel htmlFor="w" $w={30}>W:</PropLabel><TextBox id="w" defaultValue="7976" />
          <PropLabel htmlFor="x" $w={23}>X:</PropLabel><TextBox id="x" defaultValue="24" />
          <PropLabel htmlFor="h" $w={30}>H:</PropLabel><TextBox id="h" defaultValue="4016" />
          <PropLabel htmlFor="y" $w={23}>Y:</PropLabel><TextBox id="y" defaultValue="-16" />
        </Measures>
      </Column>
      <Column $w={282}>
        <PropRow>
          <FillTools><BucketIcon size={24} body="#b9b6dc" /><Swatch fill={RED} /></FillTools>
          <Drop w={195} label="Fill" value="Solid" />
        </PropRow>
        <PropRow>
          <PropLabel $w={75} htmlFor="edge">Edge:</PropLabel>
          <Drop w={126} id="edge" label="Edge" value="Anti-Alias" />
          <NumberStep w={42} label="edge amount" value="0" off />
        </PropRow>
        <PropRow>
          <PropLabel $w={75} htmlFor="texture">Texture:</PropLabel>
          <Drop w={126} id="texture" label="Texture" value="Grain" />
          <NumberStep w={42} label="texture amount" value="0" />
        </PropRow>
        <PropRow>
          <PropLabel as="span" $w={75} />
          <Check type="checkbox" id="transparent" disabled />
          <PropLabel htmlFor="transparent" $off>Transparent</PropLabel>
        </PropRow>
      </Column>
      <Column $w={311}>
        <PropRow $end>
          <svg width="24" height="24" viewBox="6 3 27 25" aria-hidden="true">
            <path d="M8 27 10 21 25 6c2-1 5 1 4 3L15 24z" fill="#e9e68c" stroke="#1c1c1c" strokeWidth="1.800" />
            <path d="m20 11 5 4 4-5c0-3-2-5-4-4z" fill="#cfcfe4" stroke="#1c1c1c" strokeWidth="1.200" />
            <path d="m8 27 1-5 4 3z" />
          </svg>
          <Swatch w={36} />
          <NumberStep w={42} label="tip size" value="0" off />
          <Drop w={152} label="Stroke" value="None" />
        </PropRow>
        <PropRow $end>
          <PropLabel>Edge:</PropLabel>
          <EdgeBox />
          <NumberStep w={42} label="stroke edge" value="0" off />
        </PropRow>
        <PropRow $end>
          <PropLabel htmlFor="stexture" $off>Texture:</PropLabel>
          <Drop w={149} id="stexture" label="Stroke texture" value="Grain" off />
          <NumberStep w={42} label="stroke texture amount" value="0" off />
        </PropRow>
        <PropRow $end>
          <PropLabel htmlFor="round">Rectangle roundness:</PropLabel>
          <NumberStep w={42} id="round" label="Rectangle roundness" value="0" />
        </PropRow>
      </Column>
      <EffectColumn>
        <PropRow>
          <OpacityIcon />
          <NumberStep w={46} label="Opacity" value="100" />
          <Drop w={129} label="Blend mode" value="Normal" />
        </PropRow>
        <PropRow>
          <EffectLabel>Effects:</EffectLabel>
          <button aria-label="Add effect">
            <svg width="18" height="16" viewBox="0 0 18 16" aria-hidden="true"><path d="M1 7h12M7 2v10" stroke="#111" strokeWidth="3.200" /><path d="M17 11v5h-5z" /></svg>
          </button>
          <button aria-label="Remove effect">
            <svg width="24" height="14" viewBox="0 0 24 14" aria-hidden="true"><path d="M9 6h13" stroke="#b9b6a8" strokeWidth="3" /></svg>
          </button>
        </PropRow>
        <EffectList />
      </EffectColumn>
      <PropEnd>
        <button aria-label="Help">
          <svg width="21" height="20" viewBox="0 0 21 20" aria-hidden="true">
            <ellipse cx="10.500" cy="10" rx="9.500" ry="8.500" fill="#f7f5ea" stroke="#33322e" strokeWidth="1.500" />
            <path d="M7.500 8c0-4 6-4 6-.5 0 2-3 2-3 4.500" fill="none" stroke="#111" strokeWidth="2" />
            <path d="M9.500 13.500h2v2h-2z" />
          </svg>
        </button>
        <button aria-label="Collapse panel">
          <svg width="19" height="10" viewBox="0 0 19 10" aria-hidden="true"><path d="M2 8.500 9.500 1.500 17 8.500z" fill="#fff" stroke="#111" strokeWidth="1.500" /></svg>
        </button>
      </PropEnd>
    </PropBody>
  </Properties>
);

const Panels = () => (
  <RightDock>
    <PanelHead><HeadGrip /><Triangle /><HeadTitle>Optimize</HeadTitle></PanelHead>
    <PanelHead $open><HeadGrip /><Triangle open /><HeadTitle $bold>Layers</HeadTitle><OptionsIcon /></PanelHead>
    <BlendRow>
      <OpacityIcon />
      <NumberStep w={48} label="Layer opacity" value="100" />
      <Drop label="Layer blend mode" value="Normal" />
    </BlendRow>
    <LayerList>
      <LayerRow $h={24} $rule>
        <LayerCell><ExpandIcon /></LayerCell>
        <LayerCell><EyeIcon /></LayerCell>
        <LayerCell />
        <LayerName>
          <FolderIcon /><LayerText>Web Layer</LayerText>
          <svg width="22" height="14" viewBox="0 0 22 14" aria-hidden="true">
            <path d="M5 3v8L0 7zM17 3v8l5-4z" fill="#9b9992" />
            <path d="M8 0v14M14 0v14M7 4h8M7 10h8" stroke="#9b9992" strokeWidth="1.500" />
          </svg>
          <LayerFlag />
        </LayerName>
      </LayerRow>
      <LayerRow $h={25}>
        <LayerCell><ExpandIcon /></LayerCell>
        <LayerCell><EyeIcon /></LayerCell>
        <LayerCell><PencilIcon w={20} h={18} /></LayerCell>
        <LayerName $tone="#a0b6e2">
          <FolderIcon /><LayerText>Layer 1</LayerText><LayerFlag><SelectedMark /></LayerFlag>
        </LayerName>
      </LayerRow>
      <LayerRow $h={31} $rule>
        <LayerCell />
        <LayerCell><EyeIcon /></LayerCell>
        <LayerCell />
        <LayerName $tone="#376fc6" $light><LayerThumb /><LayerText>Rectangle</LayerText></LayerName>
      </LayerRow>
    </LayerList>
    <LayerFoot>
      Frame 1
      <FootIcons>
        <button aria-label="New layer">
          <svg width="24" height="18" viewBox="0 0 24 18" aria-hidden="true">
            <path d="M5 16V4l3-3h6l2 3h7v12z" fill="#fbd9a6" stroke="#3a3520" strokeWidth="1.500" />
            <path d="M0 9h9M4.500 5v8" stroke="#5454a8" strokeWidth="2.200" />
          </svg>
        </button>
        <button aria-label="Add mask">
          <svg width="20" height="17" viewBox="0 0 20 17" aria-hidden="true">
            <path d="M1 1h18v15H1z" fill="#c9c7c2" stroke="#111" strokeWidth="2" />
            <circle cx="10" cy="8.500" r="4.500" fill="#fff" stroke="#111" strokeWidth="1.500" strokeDasharray="1.500 2" />
          </svg>
        </button>
        <button aria-label="New bitmap">
          <svg width="20" height="17" viewBox="0 0 20 17" aria-hidden="true">
            <path d="M1 1h18v15H1z" fill="#fff" stroke="#111" strokeWidth="2" />
            <path d="M7 2h5v5H7zM12 7h6v5h-6zM2 2h3v4H2z" fill="#cbc9d0" />
            <path d="M1 9h7v7H1z" fill="#111" /><path d="m2 10 5 5" stroke="#fff" strokeWidth="1.500" />
          </svg>
        </button>
        <button aria-label="Delete selection">
          <svg width="17" height="17" viewBox="0 0 17 17" aria-hidden="true">
            <path d="M2 5h13l-1.500 11h-10z" fill="#8fb6ea" stroke="#163a78" strokeWidth="1.500" />
            <path d="M0 4h17M6 1.500h5M5.500 6v9M8.500 6v9M11.500 6v9" stroke="#163a78" strokeWidth="1.300" />
          </svg>
        </button>
      </FootIcons>
    </LayerFoot>
    <PanelHead><HeadGrip /><Triangle /><HeadTitle>Assets</HeadTitle></PanelHead>
    <PanelHead><HeadGrip /><Triangle /><HeadTitle>Frames and History</HeadTitle></PanelHead>
  </RightDock>
);

const menus = ["File", "Edit", "View", "Select", "Modify", "Text", "Commands", "Filters", "Window", "Help"];

export default function App() {
  return (
    <Slide>
      <GlobalStyle />
      <Screen>
        <TitleBar>
          <FwLogo size={25} />
          <AppTitle>{"Macromedia Fireworks MX 2004 - [Double Page Spread.png @  12% (Rectangle)]"}</AppTitle>
          <WindowButtons>
            <WindowButton aria-label="Minimize">
              <svg width="20" height="18" viewBox="0 0 20 18" aria-hidden="true"><path d="M3 15h10" stroke="#fff" strokeWidth="4" /></svg>
            </WindowButton>
            <WindowButton aria-label="Restore">
              <svg width="18" height="16" viewBox="0 0 18 16" aria-hidden="true"><path d="M2 7h10v7H2zM6 5V2h10v8h-3" fill="none" stroke="#fff" strokeWidth="2.200" /></svg>
            </WindowButton>
            <WindowButton $close aria-label="Close">
              <svg width="18" height="16" viewBox="0 0 18 16" aria-hidden="true"><path d="m2 1 14 14M16 1 2 15" stroke="#fff" strokeWidth="3.400" /></svg>
            </WindowButton>
          </WindowButtons>
        </TitleBar>
        <MenuBar>{menus.map((m) => <button key={m}>{m}</button>)}</MenuBar>
        <Workspace>
          <LeftTools />
          <Center>
            <Document />
            <PropertyPanel />
          </Center>
          <Splitter>
            <SplitterHandle aria-label="Collapse side panels">
              <svg width="8" height="12" viewBox="0 0 8 12" aria-hidden="true"><path d="M1 1v10l6-5z" fill="#fff" /></svg>
            </SplitterHandle>
          </Splitter>
          <Panels />
        </Workspace>
        <TaskBar>
          <StartButton><WindowsFlag />start</StartButton>
          <Tasks>
            <Task $tone="active"><FwLogo size={24} />Macromedia Firework...</Task>
            <Task><BigFolder />Music Magazine</Task>
            <Task $tone="hover"><PptIcon />Front Page Analysis<Tooltip role="tooltip">Front Page Analysis</Tooltip></Task>
            <Task><PptIcon />Presentation1</Task>
          </Tasks>
          <Clock>11:39</Clock>
        </TaskBar>
      </Screen>
      <Caption>Here I started out with a normal bright red rectangular canvas.</Caption>
    </Slide>
  );
}
